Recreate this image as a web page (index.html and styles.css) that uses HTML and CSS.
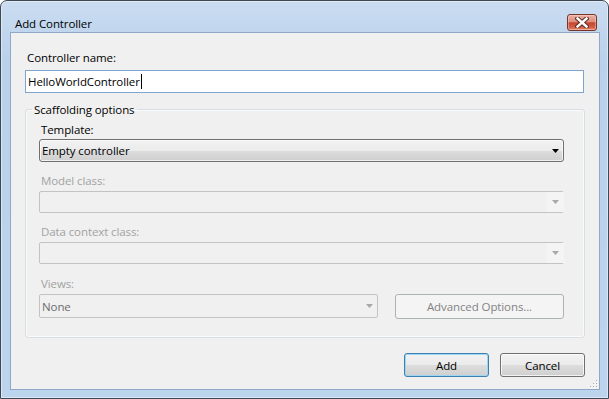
FILE: index.html
```html
<!DOCTYPE html>
<html lang="en">
<head>
  <meta charset="UTF-8" />
  <title>Add Controller</title>
  <link rel="stylesheet" href="styles.css">
</head>
<body>

<div class="window">
  <div class="titlebar">
    <span class="title">Add Controller</span>
    <div class="close_btn">
      <svg width="14" height="11" viewBox="0 0 14 11">
        <path d="M2.5 1.5 L11.5 9.5 M11.5 1.5 L2.5 9.5" stroke="#5b2b22" stroke-width="4.4" stroke-linecap="square" fill="none"/>
        <path d="M2.5 1.5 L11.5 9.5 M11.5 1.5 L2.5 9.5" stroke="#fff" stroke-width="2.4" stroke-linecap="square" fill="none"/>
      </svg>
    </div>
  </div>

  <div class="client">
    <div class="field_label">Controller name:</div>
    <div class="textbox">HelloWorldController<span class="caret"></span></div>

    <fieldset class="group">
      <legend>Scaffolding options</legend>

      <div class="row row_first">
        <div class="field_label tight">Template:</div>
        <div class="combo">
          <span class="combo_text">Empty controller</span>
          <span class="combo_arrow"><svg width="7" height="4" viewBox="0 0 7 4"><path d="M0 0H7L3.5 4Z" fill="#000"/></svg></span>
        </div>
      </div>

      <div class="row">
        <div class="field_label disabled">Model class:</div>
        <div class="combo combo_disabled">
          <span class="combo_text"></span>
          <span class="combo_arrow"><svg width="7" height="4" viewBox="0 0 7 4"><path d="M0 0H7L3.5 4Z" fill="#a8a8a8"/></svg></span>
        </div>
      </div>

      <div class="row">
        <div class="field_label disabled">Data context class:</div>
        <div class="combo combo_disabled">
          <span class="combo_text"></span>
          <span class="combo_arrow"><svg width="7" height="4" viewBox="0 0 7 4"><path d="M0 0H7L3.5 4Z" fill="#a8a8a8"/></svg></span>
        </div>
      </div>

      <div class="row row_views">
        <div class="field_label disabled">Views:</div>
        <div class="views_line">
          <div class="combo combo_disabled combo_views">
            <span class="combo_text">None</span>
            <span class="combo_arrow"><svg width="7" height="4" viewBox="0 0 7 4"><path d="M0 0H7L3.5 4Z" fill="#a8a8a8"/></svg></span>
          </div>
          <button class="btn btn_disabled btn_advanced" type="button">Advanced Options...</button>
        </div>
      </div>
    </fieldset>

    <div class="buttons">
      <button class="btn btn_default" type="button">Add</button>
      <button class="btn" type="button">Cancel</button>
    </div>

    <div class="grip">
      <svg width="9" height="9" viewBox="0 0 9 9">
        <g fill="#fff">
          <rect x="8" y="2" width="1" height="1"/><rect x="5" y="5" width="1" height="1"/><rect x="8" y="5" width="1" height="1"/>
          <rect x="2" y="8" width="1" height="1"/><rect x="5" y="8" width="1" height="1"/><rect x="8" y="8" width="1" height="1"/>
        </g>
        <g fill="#a3aeb9">
          <rect x="7" y="1" width="1" height="1"/><rect x="4" y="4" width="1" height="1"/><rect x="7" y="4" width="1" height="1"/>
          <rect x="1" y="7" width="1" height="1"/><rect x="4" y="7" width="1" height="1"/><rect x="7" y="7" width="1" height="1"/>
        </g>
      </svg>
    </div>
  </div>
</div>

</body>
</html>
```

FILE: styles.css
```css
*{box-sizing:border-box; margin:0; padding:0;}
html, body{width:609px; height:399px; background:#fff; overflow:hidden;}
body{font-family:"Open Sans", "Noto Sans", sans-serif; font-size:11.5px; letter-spacing:-0.1px; color:#000;}

/* window frame */
.window{width:609px; height:399px; display:flex; flex-direction:column;
        border:1px solid #3f4752; border-radius:7px 7px 0 0;
        background:linear-gradient(#cadcf1, #b9d1eb 60px, #bdd4ee);
        box-shadow:inset 0 0 0 1px rgba(255,255,255,.45);
        padding:0 8px 8px 9px;}
.titlebar{height:31px; flex:none; display:flex; align-items:flex-end; justify-content:space-between;}
.title{line-height:15px; margin:0 0 1px 5px; color:#000;}
.close_btn{width:30px; height:17px; margin:0 3px 1px 0; display:flex; align-items:center; justify-content:center;
           border:1px solid #7a3427; border-radius:3px;
           background:linear-gradient(#eab0a3 0%, #dc8f7e 45%, #c6452d 52%, #cf5d44 80%, #e08a70 100%);
           box-shadow:inset 0 0 0 1px rgba(255,220,210,.45);}

/* client area */
.client{flex:1; position:relative; background:#f0f0f0; border:1px solid #8fa8c6; padding:17px 14px 0 14px;}
.field_label{line-height:15px; margin-bottom:3px; padding-left:2px;}
.field_label.tight{margin-bottom:2px;}
.field_label.disabled{color:#a2a2a2;}

.textbox{height:23px; margin:5px 1px 0 0; background:#fff; border:1px solid #7ea4cf;
         padding:0 2px; line-height:21px; white-space:nowrap; display:flex; align-items:center;}
.caret{display:inline-block; width:1px; height:15px; background:#000; margin-left:1px;}

/* group box */
.group{margin-top:9px; border:1px solid #d5dfe5; border-radius:3px; padding:5px 20px 18px 13px;
       box-shadow:inset 0 0 0 1px #fafafa;}
.group legend{line-height:15px; padding:0 2px; margin-left:-7px;}
.row{margin-top:11px;}
.row_first{margin-top:0;}
.row_views{margin-top:12px;}

.combo{height:22px; display:flex; align-items:center; border:1px solid #707070; border-radius:3px;
       background:linear-gradient(#f2f2f2 0%, #ebebeb 50%, #dddddd 51%, #cfcfcf 100%);
       box-shadow:inset 0 0 0 1px rgba(255,255,255,.7);}
.row_first .combo{height:23px;}
.combo_text{flex:1; padding-left:2px; line-height:15px; white-space:nowrap;}
.combo_arrow{width:17px; height:100%; display:flex; align-items:center; justify-content:center; margin-right:-1px;}
.combo_disabled{border-color:#c3c3c3; border-radius:2px; background:#f0f0f0; box-shadow:none;}
.combo_disabled .combo_arrow{background:#f4f4f4;}
.combo_views{width:339px; height:24px; color:#6d6d6d;}
.combo_views .combo_arrow{background:none;}

.views_line{display:flex; justify-content:space-between;}

/* buttons */
.btn{font-family:inherit; font-size:11.5px; letter-spacing:-0.1px; color:#000; height:24px; width:85px;
     border:1px solid #707070; border-radius:3px;
     background:linear-gradient(#f2f2f2 0%, #ebebeb 50%, #dddddd 51%, #cfcfcf 100%);
     box-shadow:inset 0 0 0 1px rgba(255,255,255,.75);}
.btn_default{border-color:#3c7fb1; box-shadow:inset 0 0 0 1px #9fd6f2;}
.btn_disabled{border-color:#adb2b5; background:#f4f4f4; color:#838383; box-shadow:none;}
.btn_advanced{width:169px; height:25px;}
.buttons{display:flex; justify-content:flex-end; gap:11px; margin-top:15px;}

.grip{position:absolute; right:1px; bottom:1px; width:9px; height:9px;}
.grip svg{display:block;}
```
